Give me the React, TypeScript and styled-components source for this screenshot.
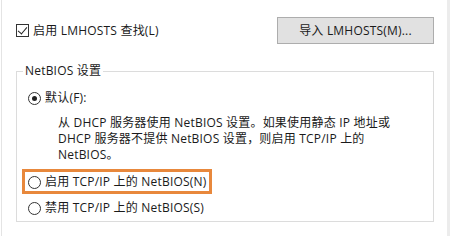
import React from 'react';
import styled, { createGlobalStyle } from 'styled-components';

const GlobalStyle = createGlobalStyle`
  html, body {
    margin: 0;
    padding: 0;
    background: #fff;
  }
  body {
    font-family: 'Open Sans', 'Noto Sans CJK SC', sans-serif;
    font-size: 12px;
    letter-spacing: 0.2px;
    color: #1a1a1a;
  }
`;

const Frame = styled.div`
  display: flex;
  width: 450px;
  height: 236px;
  margin-left: 1px;
  border-left: 1px solid #e4e4e4;
  overflow: hidden;
`;

const Content = styled.div`
  flex: 1;
  display: flex;
  flex-direction: column;
  padding: 17px 13px 0 14px;
`;

const Rail = styled.div`
  width: 3px;
  margin-right: 2px;
  background: #ececec;
`;

const TopRow = styled.div`
  display: flex;
  align-items: center;
  justify-content: space-between;
  height: 27px;
`;

const Option = styled.label`
  display: flex;
  align-items: center;
  gap: 4px;
  height: 16px;
  line-height: 16px;
  white-space: nowrap;
`;

const CheckBox = styled.span`
  position: relative;
  width: 11px;
  height: 11px;
  border: 1px solid #333;
  background: #fff;

  &::after {
    content: '';
    position: absolute;
    left: 3px;
    top: 0px;
    width: 4px;
    height: 8px;
    border-right: 1px solid #222;
    border-bottom: 1px solid #222;
    transform: rotate(40deg);
  }
`;

const Radio = styled.span<{ $checked?: boolean }>`
  position: relative;
  flex: none;
  width: 11px;
  height: 11px;
  border: 1px solid #333;
  border-radius: 50%;
  background: #fff;

  &::after {
    content: '';
    display: ${(p) => (p.$checked ? 'block' : 'none')};
    position: absolute;
    left: 3px;
    top: 3px;
    width: 5px;
    height: 5px;
    border-radius: 50%;
    background: #222;
  }
`;

const Button = styled.button`
  width: 157px;
  height: 27px;
  margin: 0;
  padding: 0;
  border: 1px solid #adadad;
  background: #e1e1e1;
  font-family: inherit;
  font-size: 12px;
  letter-spacing: inherit;
  line-height: 16px;
  color: #1a1a1a;
`;

const Group = styled.fieldset`
  margin: 19px 0 0 0;
  padding: 11px 11px 0 11px;
  height: 159px;
  box-sizing: border-box;
  border: 1px solid #dcdcdc;
  display: flex;
  flex-direction: column;
`;

const Legend = styled.legend`
  margin-left: -5px;
  padding: 0 2px;
  line-height: 16px;
`;

const Description = styled.p`
  margin: 9px 0 0 30px;
  line-height: 16px;
  white-space: nowrap;
`;

const Highlight = styled.div`
  align-self: flex-start;
  margin: 6px 0 0 -6px;
  padding: 2px 2px 1px 3px;
  border: 3px solid #e8883c;
`;

const LastOption = styled(Option)`
  margin-top: 6px;
`;

export default function App() {
  return (
    <>
      <GlobalStyle />
      <Frame>
        <Content>
          <TopRow>
            <Option>
              <CheckBox />
              启用 LMHOSTS 查找(L)
            </Option>
            <Button>导入 LMHOSTS(M)...</Button>
          </TopRow>

          <Group>
            <Legend>NetBIOS 设置</Legend>
            <Option>
              <Radio $checked />
              默认(F):
            </Option>
            <Description>
              从 DHCP 服务器使用 NetBIOS 设置。如果使用静态 IP 地址或
              <br />
              DHCP 服务器不提供 NetBIOS 设置，则启用 TCP/IP 上的
              <br />
              NetBIOS。
            </Description>
            <Highlight>
              <Option>
                <Radio />
                启用 TCP/IP 上的 NetBIOS(N)
              </Option>
            </Highlight>
            <LastOption>
              <Radio />
              禁用 TCP/IP 上的 NetBIOS(S)
            </LastOption>
          </Group>
        </Content>
        <Rail />
      </Frame>
    </>
  );
}
